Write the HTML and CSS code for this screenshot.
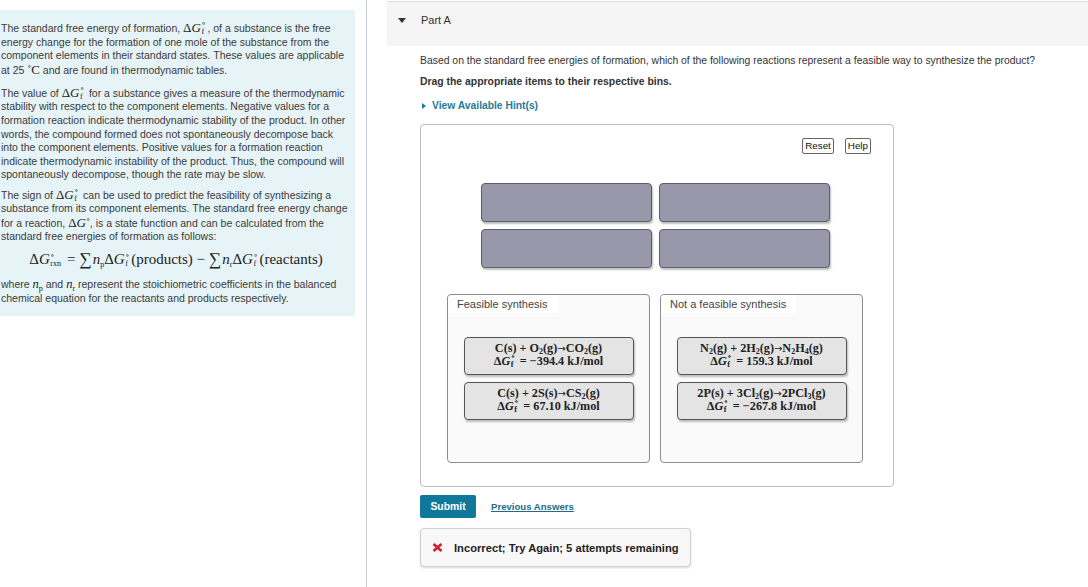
FILE: index.html
```html
<!DOCTYPE html>
<html>
<head>
<meta charset="utf-8">
<link rel="stylesheet" href="styles.css">
</head>
<body>
<div class="page">
  <aside class="left">
    <div class="intro">
      <p>The standard free energy of formation, <span class="m">Δ<i>G</i><span class="ss"><span class="sup">∘</span><span class="sub">f</span></span></span>, of a substance is the free energy change for the formation of one mole of the substance from the component elements in their standard states. These values are applicable at 25 <span class="m"><span class="deg">∘</span>C</span> and are found in thermodynamic tables.</p>
      <p class="p2">The value of <span class="m">Δ<i>G</i><span class="ss"><span class="sup">∘</span><span class="sub">f</span></span></span> for a substance gives a measure of the thermodynamic stability with respect to the component elements. Negative values for a formation reaction indicate thermodynamic stability of the product. In other words, the compound formed does not spontaneously decompose back into the component elements. Positive values for a formation reaction indicate thermodynamic instability of the product. Thus, the compound will spontaneously decompose, though the rate may be slow.</p>
      <p>The sign of <span class="m">Δ<i>G</i><span class="ss"><span class="sup">∘</span><span class="sub">f</span></span></span> can be used to predict the feasibility of synthesizing a substance from its component elements. The standard free energy change for a reaction, <span class="m">Δ<i>G</i><span class="deg">∘</span></span>, is a state function and can be calculated from the standard free energies of formation as follows:</p>
      <div class="eq"><span class="m big">Δ<i>G</i><span class="ss wide"><span class="sup">∘</span><span class="sub">rxn</span></span> = <span class="sum">∑</span><i>n</i><span class="lsub">p</span>Δ<i>G</i><span class="ss"><span class="sup">∘</span><span class="sub">f</span></span>(products) − <span class="sum">∑</span><i>n</i><span class="lsub">r</span>Δ<i>G</i><span class="ss"><span class="sup">∘</span><span class="sub">f</span></span>(reactants)</span></div>
      <p>where <span class="m mid"><i>n</i><span class="lsub">p</span></span> and <span class="m mid"><i>n</i><span class="lsub">r</span></span> represent the stoichiometric coefficients in the balanced chemical equation for the reactants and products respectively.</p>
    </div>
  </aside>
  <main class="right">
    <div class="part-head">
      <span class="tri-down"></span>
      <span class="part-title">Part A</span>
    </div>
    <div class="content">
      <p class="question">Based on the standard free energies of formation, which of the following reactions represent a feasible way to synthesize the product?</p>
      <p class="instr">Drag the appropriate items to their respective bins.</p>
      <div class="hint"><span class="tri-right"></span>View Available Hint(s)</div>
      <div class="dnd">
        <div class="tools">
          <button class="tbtn">Reset</button>
          <button class="tbtn">Help</button>
        </div>
        <div class="slots">
          <div class="slot"></div>
          <div class="slot"></div>
          <div class="slot"></div>
          <div class="slot"></div>
        </div>
        <div class="bins">
          <div class="bin">
            <div class="bin-label">Feasible synthesis</div>
            <div class="bin-items">
              <div class="item">
                <div class="rx">C(s) + O<sub>2</sub>(g)<span class="arr">→</span>CO<sub>2</sub>(g)</div>
                <div class="rx">Δ<i>G</i><span class="ss"><span class="sup">∘</span><span class="sub">f</span></span> = −394.4 kJ/mol</div>
              </div>
              <div class="item">
                <div class="rx">C(s) + 2S(s)<span class="arr">→</span>CS<sub>2</sub>(g)</div>
                <div class="rx">Δ<i>G</i><span class="ss"><span class="sup">∘</span><span class="sub">f</span></span> = 67.10 kJ/mol</div>
              </div>
            </div>
          </div>
          <div class="bin">
            <div class="bin-label">Not a feasible synthesis</div>
            <div class="bin-items">
              <div class="item">
                <div class="rx">N<sub>2</sub>(g) + 2H<sub>2</sub>(g)<span class="arr">→</span>N<sub>2</sub>H<sub>4</sub>(g)</div>
                <div class="rx">Δ<i>G</i><span class="ss"><span class="sup">∘</span><span class="sub">f</span></span> = 159.3 kJ/mol</div>
              </div>
              <div class="item">
                <div class="rx">2P(s) + 3Cl<sub>2</sub>(g)<span class="arr">→</span>2PCl<sub>3</sub>(g)</div>
                <div class="rx">Δ<i>G</i><span class="ss"><span class="sup">∘</span><span class="sub">f</span></span> = −267.8 kJ/mol</div>
              </div>
            </div>
          </div>
        </div>
      </div>
      <div class="actions">
        <button class="submit">Submit</button>
        <a class="prev" href="#">Previous Answers</a>
      </div>
      <div class="feedback">
        <svg class="xicon" width="11" height="9" viewBox="0 0 11 9"><path d="M1.5 1 L9.5 8 M9.5 1 L1.5 8" stroke="#d0202e" stroke-width="2.6" stroke-linecap="butt"/></svg>
        <span>Incorrect; Try Again; 5 attempts remaining</span>
      </div>
    </div>
  </main>
</div>
</body>
</html>
```
FILE: styles.css
```css
* { box-sizing: border-box; }
html, body { margin: 0; padding: 0; background: #fff; }
body {
  font-family: "Liberation Sans", Arial, sans-serif;
  color: #333;
  width: 1088px;
  height: 587px;
  overflow: hidden;
}
.page { display: flex; height: 587px; }

.left {
  width: 367px;
  flex: 0 0 367px;
  border-right: 1px solid #c9ced3;
  padding-top: 10px;
}
.intro {
  width: 355px;
  background: #e7f4f7;
  padding: 11px 4px 10px 1px;
  font-size: 10.5px;
  line-height: 13.6px;
  color: #3a3a3a;
}
.intro p { margin: 0 0 8.5px 0; }
.intro p.p2 { margin-bottom: 5.5px; }
.intro p:last-child { margin-bottom: 0; }

.m { font-family: "Liberation Serif", "DejaVu Serif", serif; font-size: 13px; white-space: nowrap; color: #222; }
.m i { font-style: italic; }
.m.mid { font-size: 12.5px; }

.ss {
  display: inline-block;
  position: relative;
  width: 6px;
  height: 1px;
  margin-left: 0.5px;
}
.ss.wide { width: 13px; }
.ss .sup, .ss .sub {
  position: absolute;
  left: 0;
  font-size: 8px;
  line-height: 8px;
  font-style: normal;
}
.ss .sup { top: -11px; }
.ss .sub { top: -3px; }
.deg { font-size: 8px; vertical-align: 5px; line-height: 0; }
.lsub { font-size: 8px; vertical-align: -3px; line-height: 0; }

.eq { text-align: center; padding: 0 0 11px 0; line-height: 14px; }
.m.big { font-size: 15px; }
.sum { font-size: 17.5px; vertical-align: -1px; line-height: 0; margin-right: 1px; }

.right { flex: 1; padding-top: 1px; }
.part-head {
  margin-left: 20px;
  height: 45px;
  background: #f5f5f5;
  border-top: 1px solid #dcdcdc;
  display: flex;
  align-items: center;
  padding-left: 11px;
  padding-bottom: 8px;
}
.tri-down {
  width: 0; height: 0;
  border-left: 4px solid transparent;
  border-right: 4px solid transparent;
  border-top: 5px solid #333;
  margin-right: 15px;
}
.part-title { font-size: 11px; color: #333; }

.content { margin-left: 53px; font-size: 10.4px; }
.question { margin: 9px 0 0 0; line-height: 12px; color: #333; }
.instr { margin: 9px 0 0 0; font-weight: bold; line-height: 12px; color: #333; font-size: 10.4px; }
.hint {
  margin-top: 12px;
  color: #1f7a9a;
  font-weight: bold;
  font-size: 10.3px;
  line-height: 12px;
  display: flex;
  align-items: center;
}
.tri-right {
  width: 0; height: 0;
  border-top: 3.5px solid transparent;
  border-bottom: 3.5px solid transparent;
  border-left: 4px solid #1f7a9a;
  margin: 0 6px 0 2px;
}

.dnd {
  margin-top: 12px;
  width: 474px;
  height: 363px;
  border: 1px solid #bdbdbd;
  border-radius: 4px;
  padding: 13px 22px 0 26px;
}
.tools { display: flex; justify-content: flex-end; gap: 11px; }
.tbtn {
  font-family: "Liberation Sans", Arial, sans-serif;
  font-size: 9.8px;
  background: #fff;
  border: 1px solid #666;
  border-radius: 2px;
  padding: 0 2px;
  height: 16px;
  line-height: 14px;
  color: #111;
}
.slots {
  margin: 29px 0 0 34px;
  width: 349px;
  display: grid;
  grid-template-columns: 171px 171px;
  column-gap: 7px;
  row-gap: 7px;
}
.slot {
  height: 39px;
  background: #9998aa;
  border: 1px solid #5e5e66;
  border-radius: 4px;
  box-shadow: 1px 2px 2px rgba(0,0,0,0.25);
}
.bins {
  margin-top: 26px;
  display: flex;
  gap: 10px;
}
.bin {
  width: 203px;
  height: 169px;
  border: 1px solid #8c8c8c;
  border-radius: 4px;
  background: #fafafa;
}
.bin-label {
  display: inline-block;
  background: #fff;
  font-size: 11px;
  color: #444;
  padding: 3px 10px 3px 9px;
  line-height: 12px;
  border-radius: 4px 0 0 0;
}
.bin-items {
  margin-top: 24px;
  display: flex;
  flex-direction: column;
  align-items: center;
  gap: 7px;
}
.item {
  width: 170px;
  height: 38px;
  background: #e4e4e4;
  border: 1px solid #555;
  border-radius: 4px;
  box-shadow: 1px 2px 2px rgba(0,0,0,0.25);
  display: flex;
  flex-direction: column;
  justify-content: center;
  align-items: center;
  font-family: "Liberation Serif", "DejaVu Serif", serif;
  font-weight: bold;
  font-size: 12.2px;
  line-height: 12.5px;
  color: #222;
  padding-bottom: 3px;
}
.item .rx { white-space: nowrap; }
.item sub { font-size: 8px; vertical-align: -2px; line-height: 0; }
.item i { font-style: italic; }
.item .ss .sup, .item .ss .sub { font-size: 8px; font-weight: bold; }
.arr { font-family: "DejaVu Sans", sans-serif; font-weight: normal; font-size: 10px; }

.actions { margin-top: 8px; display: flex; align-items: center; gap: 15px; }
.submit {
  font-family: "Liberation Sans", Arial, sans-serif;
  background: #10789a;
  color: #fff;
  border: none;
  border-radius: 2px;
  font-weight: bold;
  font-size: 10.4px;
  width: 56px;
  height: 23px;
  padding: 0;
}
.prev {
  color: #1d6c8e;
  font-weight: bold;
  font-size: 9.6px;
  text-decoration: underline;
}
.feedback {
  margin-top: 10px;
  width: 271px;
  height: 39px;
  border: 1px solid #d0d0d0;
  border-radius: 4px;
  background: #f8f8f8;
  box-shadow: 0 1px 2px rgba(0,0,0,0.15);
  display: flex;
  align-items: center;
  padding-left: 11px;
  gap: 11px;
  font-weight: bold;
  font-size: 11.2px;
  color: #222;
}
.xicon { flex: 0 0 auto; }
```
